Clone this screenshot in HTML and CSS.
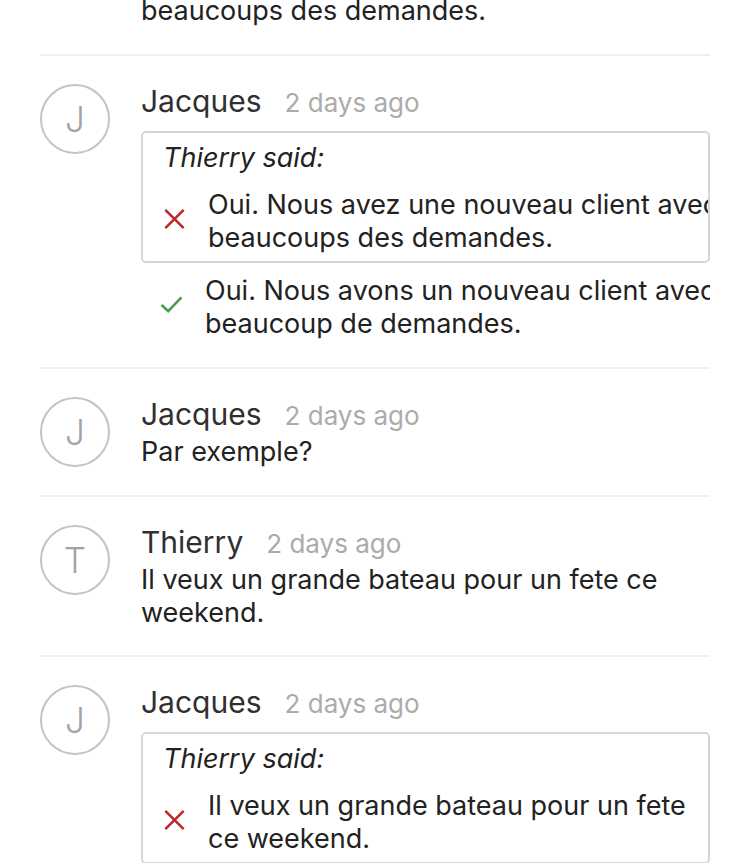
FILE: index.html
```html
<!DOCTYPE html>
<html lang="fr">
<head>
<meta charset="utf-8">
<title>Comments</title>
<link rel="stylesheet" href="styles.css">
</head>
<body>
<div class="feed">
  <div class="item partial">
    <div class="avatar-space"></div>
    <div class="content">
      <p class="body">beaucoups des demandes.</p>
    </div>
  </div>

  <div class="item">
    <div class="avatar">J</div>
    <div class="content">
      <div class="head"><span class="name">Jacques</span><span class="time">2 days ago</span></div>
      <div class="quote">
        <p class="said">Thierry said:</p>
        <div class="line">
          <svg class="icon-x" viewBox="0 0 24 24" width="23" height="22"><path d="M2 2 L22 22 M22 2 L2 22" stroke="#c0262b" stroke-width="2.8" fill="none"/></svg>
          <p class="text">Oui. Nous avez une nouveau client avec<br>beaucoups des demandes.</p>
        </div>
      </div>
      <div class="line fix">
        <svg class="icon-check" viewBox="0 0 24 18" width="23" height="17"><path d="M1.5 9.5 L8.5 16 L22.5 1.5" stroke="#4b9e4b" stroke-width="2.8" fill="none"/></svg>
        <p class="text">Oui. Nous avons un nouveau client avec<br>beaucoup de demandes.</p>
      </div>
    </div>
  </div>

  <div class="item">
    <div class="avatar">J</div>
    <div class="content">
      <div class="head"><span class="name">Jacques</span><span class="time">2 days ago</span></div>
      <p class="body">Par exemple?</p>
    </div>
  </div>

  <div class="item tight">
    <div class="avatar">T</div>
    <div class="content">
      <div class="head"><span class="name">Thierry</span><span class="time">2 days ago</span></div>
      <p class="body">Il veux un grande bateau pour un fete ce<br>weekend.</p>
    </div>
  </div>

  <div class="item">
    <div class="avatar">J</div>
    <div class="content">
      <div class="head"><span class="name">Jacques</span><span class="time">2 days ago</span></div>
      <div class="quote">
        <p class="said">Thierry said:</p>
        <div class="line">
          <svg class="icon-x" viewBox="0 0 24 24" width="23" height="22"><path d="M2 2 L22 22 M22 2 L2 22" stroke="#c0262b" stroke-width="2.8" fill="none"/></svg>
          <p class="text">Il veux un grande bateau pour un fete<br>ce weekend.</p>
        </div>
      </div>
    </div>
  </div>
</div>
</body>
</html>
```

FILE: styles.css
```css
html, body {
  margin: 0;
  padding: 0;
  background: #ffffff;
}

body {
  font-family: Inter, "Noto Sans", "Liberation Sans", sans-serif;
  color: #222222;
  overflow: hidden;
}

.feed {
  padding: 0 40px;
  margin-top: -30px;
}

.item {
  display: flex;
  align-items: flex-start;
  gap: 31px;
  padding: 24px 0 27px;
  border-bottom: 2px solid #efefef;
  overflow: hidden;
}

.item.tight {
  padding-bottom: 26px;
}

.avatar-space {
  width: 70px;
  flex: 0 0 70px;
}

.avatar {
  flex: 0 0 70px;
  width: 70px;
  height: 70px;
  margin-top: 4px;
  box-sizing: border-box;
  border: 2px solid #c4c4c4;
  border-radius: 50%;
  display: flex;
  align-items: center;
  justify-content: center;
  font-size: 35px;
  font-weight: 300;
  color: #a2a2a2;
}

.content {
  flex: 1;
  min-width: 0;
}

.head {
  display: flex;
  align-items: baseline;
  gap: 23px;
  height: 42px;
  line-height: 42px;
  white-space: nowrap;
}

.name {
  font-size: 30px;
  color: #303030;
}

.time {
  font-size: 26px;
  color: #ababab;
}

p {
  margin: 0;
}

.body {
  font-size: 27px;
  line-height: 33px;
  white-space: nowrap;
}

.quote {
  margin-top: 9px;
  border: 2px solid #d6d6d6;
  border-radius: 5px;
  padding: 8px 0 7px 20px;
  overflow: hidden;
}

.said {
  font-size: 27px;
  font-style: italic;
  line-height: 33px;
  margin-bottom: 14px;
}

.line {
  display: flex;
  align-items: center;
  gap: 22px;
}

.line .text {
  font-size: 27px;
  line-height: 33px;
  white-space: nowrap;
}

.quote .icon-x {
  margin-top: -4px;
}

.fix {
  margin-top: 11px;
  padding-left: 19px;
}

.fix .icon-check {
  margin-top: -6px;
}

.icon-x, .icon-check {
  flex: 0 0 auto;
  display: block;
}
```
